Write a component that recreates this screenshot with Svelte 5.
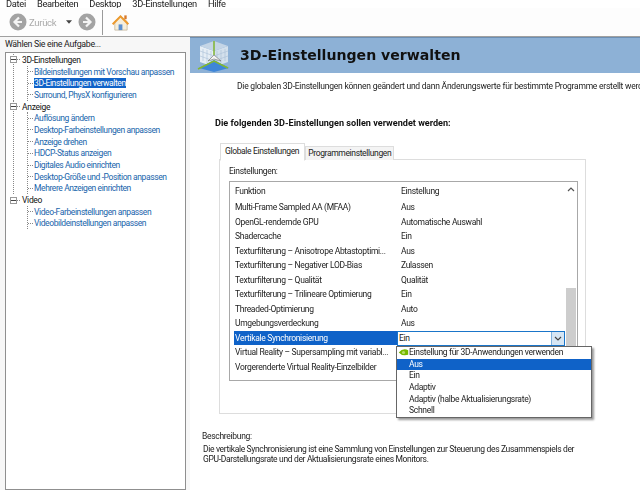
<script>
  const tree = [
    { name: "3D-Einstellungen", items: ["Bildeinstellungen mit Vorschau anpassen", "3D-Einstellungen verwalten", "Surround, PhysX konfigurieren"] },
    { name: "Anzeige", items: ["Auflösung ändern", "Desktop-Farbeinstellungen anpassen", "Anzeige drehen", "HDCP-Status anzeigen", "Digitales Audio einrichten", "Desktop-Größe und -Position anpassen", "Mehrere Anzeigen einrichten"] },
    { name: "Video", items: ["Video-Farbeinstellungen anpassen", "Videobildeinstellungen anpassen"] }
  ];
  const rows = [
    ["Multi-Frame Sampled AA (MFAA)", "Aus"],
    ["OpenGL-rendernde GPU", "Automatische Auswahl"],
    ["Shadercache", "Ein"],
    ["Texturfilterung – Anisotrope Abtastoptimi...", "Aus"],
    ["Texturfilterung – Negativer LOD-Bias", "Zulassen"],
    ["Texturfilterung – Qualität", "Qualität"],
    ["Texturfilterung – Trilineare Optimierung", "Ein"],
    ["Threaded-Optimierung", "Auto"],
    ["Umgebungsverdeckung", "Aus"],
    ["Vertikale Synchronisierung", ""],
    ["Virtual Reality – Supersampling mit variabl...", ""],
    ["Vorgerenderte Virtual Reality-Einzelbilder", ""]
  ];
  const options = ["Aus", "Ein", "Adaptiv", "Adaptiv (halbe Aktualisierungsrate)", "Schnell"];
</script>

<div class="app">
  <div class="menubar">
    <span>Datei</span><span>Bearbeiten</span><span>Desktop</span><span>3D-Einstellungen</span><span>Hilfe</span>
  </div>

  <div class="toolbar">
    <svg class="nav" viewBox="0 0 18 18" width="18" height="18">
      <circle cx="9" cy="9" r="8.500" fill="#a3a3a3" />
      <path d="M10 4.500 5.500 9l4.500 4.500M6 9h7" fill="none" stroke="#f4f4f4" stroke-width="2.200" />
    </svg>
    <span class="back">Zurück</span>
    <svg class="caret" viewBox="0 0 7 4" width="6" height="4"><path d="M0 0h7L3.500 4z" fill="#444" /></svg>
    <svg class="nav" viewBox="0 0 18 18" width="18" height="18">
      <circle cx="9" cy="9" r="8.500" fill="#a3a3a3" />
      <path d="M8 4.500 12.500 9 8 13.500M12 9H5" fill="none" stroke="#f4f4f4" stroke-width="2.200" />
    </svg>
    <div class="sep"></div>
    <svg class="home" viewBox="0 0 20 20" width="19" height="19">
      <path d="M4 9v9h13V9L10 3z" fill="#f6efdc" stroke="#b9a98a" stroke-width=".7" />
      <rect x="8" y="12" width="4" height="6" fill="#5b8fd0" />
      <path d="M1 11 10 2l9 9-1.500 1.500L10 5l-7.500 7.500z" fill="#ec9a2e" />
      <rect x="14" y="2.500" width="2.500" height="4" fill="#d8792a" />
    </svg>
  </div>

  <div class="main">
    <aside class="left">
      <div class="task">Wählen Sie eine Aufgabe...</div>
      <div class="treebox">
        {#each tree as group}
          <div class="branch">
            <div class="group">
              <span class="expander"></span><span class="dots"></span><span class="gname">{group.name}</span>
            </div>
            <ul>
              {#each group.items as item}
                <li><span class="link" class:selected={item === "3D-Einstellungen verwalten"}>{item}</span></li>
              {/each}
            </ul>
          </div>
        {/each}
      </div>
    </aside>

    <section class="right">
      <header class="banner">
        <svg viewBox="0 0 36 36" width="36" height="36">
          <path d="M18 30 4 25V9l14 5z" fill="#e6eef5" />
          <path d="M18 30l14-5V9l-14 5z" fill="#d3e0ec" />
          <path d="M4 9l14-5 14 5-14 5z" fill="#c4d5e6" />
          <path d="M7 12v12M11 13v13M15 14v14M21 14v14M25 13v13M29 12v12M4 14l14 5 14-5M4 19l14 5 14-5" stroke="#a9c0d6" stroke-width=".6" fill="none" />
          <path d="M18 4v14" stroke="#7fb531" stroke-width="1.500" />
          <path d="M3 31l15-8 15 8-15 4z" fill="#3f86d8" />
          <path d="M2 32l16-8 14 7" fill="none" stroke="#86b92e" stroke-width="1.500" />
          <path d="M12 24l6-6 7 6-7-2z" fill="#f4f4f4" stroke="#555" stroke-width=".5" />
        </svg>
        <h1>3D-Einstellungen verwalten</h1>
      </header>
      <p class="intro">Die globalen 3D-Einstellungen können geändert und dann Änderungswerte für bestimmte Programme erstellt werden.</p>
      <h2>Die folgenden 3D-Einstellungen sollen verwendet werden:</h2>

      <div class="tabs">
        <div class="tab active">Globale Einstellungen</div>
        <div class="tab">Programmeinstellungen</div>
      </div>
      <div class="panel">
        <div class="label">Einstellungen:</div>
        <div class="table">
          <div class="rows">
            <div class="row head"><span>Funktion</span><span>Einstellung</span></div>
            {#each rows as r}
              <div class="row" class:sel={r[0].startsWith("Vertikale")}>
                <span class="name">{r[0]}</span>
                <span class="value">{r[1]}</span>
              </div>
            {/each}
          </div>
          <div class="scrollbar">
            <svg viewBox="0 0 8 5" width="8" height="5"><path d="M1 4l3-3 3 3" fill="none" stroke="#555" stroke-width="1.200" /></svg>
            <div class="thumb"></div>
          </div>

          <div class="combo">
            <span>Ein</span>
            <span class="drop"><svg viewBox="0 0 8 5" width="8" height="5"><path d="M1 1l3 3 3-3" fill="none" stroke="#444" stroke-width="1.200" /></svg></span>
          </div>
          <div class="popup">
            <div class="opt first">
              <svg viewBox="0 0 14 8" width="11" height="7"><path d="M1 4q5-6 12-3v6q-8 2-12-3z" fill="#76b900" /><circle cx="7" cy="4" r="2" fill="#b7dc6a" /></svg>
              <span>Einstellung für 3D-Anwendungen verwenden</span>
            </div>
            {#each options as o, i}
              <div class="opt" class:hot={i === 0}>{o}</div>
            {/each}
          </div>
        </div>
      </div>

      <div class="desc">
        <div class="dlabel">Beschreibung:</div>
        <p>Die vertikale Synchronisierung ist eine Sammlung von Einstellungen zur Steuerung des Zusammenspiels der<br />GPU-Darstellungsrate und der Aktualisierungsrate eines Monitors.</p>
      </div>
    </section>
  </div>
</div>

<style>
:global(body) {
  margin: 0;
  background: #fff;
}

.app {
  width: 640px;
  height: 490px;
  overflow: hidden;
  display: flex;
  flex-direction: column;
  font-family: Roboto, "Liberation Sans", Arial, sans-serif;
  font-size: 8.500px;
  letter-spacing: -0.3px;
  color: #222;
  filter: blur(0.3px);
}

.menubar {
  height: 8px;
  flex: none;
  display: flex;
  gap: 11px;
  padding-left: 6px;
  font-size: 9.300px;
  overflow: hidden;
  align-items: flex-end;
}

.menubar span {
  line-height: 8px;
  height: 8px;
  margin-top: -5px;
}

.toolbar {
  height: 29px;
  flex: none;
  display: flex;
  align-items: center;
  padding-left: 9px;
  border-bottom: 1px solid #a0a0a0;
  background: #fdfdfd;
  box-sizing: border-box;
}

.back {
  color: #aaa;
  margin-left: 2px;
  font-size: 9.500px;
  width: 27px;
}

.caret {
  margin: 0 6px 0 10px;
}

.sep {
  width: 1px;
  height: 25px;
  background: #9a9a9a;
  margin: 0 8px 0 6px;
}

.main {
  flex: 1;
  display: flex;
  min-height: 0;
}

.left {
  width: 190px;
  flex: none;
  display: flex;
  flex-direction: column;
  background: #f7f7f7;
}

.task {
  height: 15px;
  line-height: 15px;
  padding-left: 5px;
  font-size: 8.800px;
}

.treebox {
  flex: 1;
  margin-left: 5px;
  margin-right: 4px;
  border: 1px solid #8f8f8f;
  background: #fff;
  padding-top: 1px;
}

.branch:not(:last-child) {
  background: repeating-linear-gradient(#888 0 1px, transparent 1px 2px) 7px 0 / 1px 100% no-repeat;
}

.group {
  height: 11.700px;
  display: flex;
  align-items: center;
  color: #111;
}

.expander {
  width: 5px;
  height: 5px;
  border: 1px solid #999;
  margin-left: 4px;
  flex: none;
  background: linear-gradient(#fff 0 2px, #444 2px 3px, #fff 3px);
}

.dots {
  width: 3px;
  border-top: 1px dotted #888;
  margin-right: 2px;
}

ul {
  list-style: none;
  margin: 0 0 0 21px;
  padding: 0;
  border-left: 1px dotted #888;
}

li {
  height: 11.700px;
  color: #1864ab;
  white-space: nowrap;
  letter-spacing: -0.4px;
  display: flex;
  align-items: center;
}

li::before {
  content: "";
  width: 5px;
  flex: none;
  border-top: 1px dotted #888;
  margin-right: 1px;
}

.selected {
  background: #0f62c8;
  color: #fff;
}

.right {
  flex: 1;
  position: relative;
  min-width: 0;
}

.banner {
  height: 36px;
  box-sizing: border-box;
  background: linear-gradient(#6d8fb2 0 1px, #8db1d6 1px);
  display: flex;
  align-items: center;
  padding-left: 6px;
  gap: 8px;
}

h1 {
  margin: 0;
  font-family: "DejaVu Sans", sans-serif;
  font-size: 14.100px;
  letter-spacing: 0;
  font-weight: 700;
  color: #111;
}

.intro {
  margin: 7px 0 0 47px;
  white-space: nowrap;
  line-height: 12px;
  letter-spacing: -0.23px;
}

h2 {
  margin: 25px 0 0 25px;
  font-size: 9.100px;
  letter-spacing: 0;
  line-height: 12px;
  font-weight: 700;
  color: #111;
}

.tabs {
  display: flex;
  margin: 15px 0 0 30px;
  height: 16px;
  position: relative;
  z-index: 1;
}

.tab {
  line-height: 13px;
  height: 13px;
  margin-top: 2px;
  padding: 0 2px;
  border: 1px solid #ddd;
  border-bottom: none;
  background: #f4f4f4;
  letter-spacing: -0.35px;
}

.tab.active {
  height: 16px;
  margin-top: -1px;
  background: #fff;
  padding: 0 5px 0 4px;
  border-bottom: 1px solid #fff;
  line-height: 15px;
}

.panel {
  margin: -1px 0 0 29px;
  width: 367px;
  height: 255px;
  box-sizing: border-box;
  border: 1px solid #ddd;
  padding: 5px 7px 0 9px;
  background: #fff;
}

.label {
  line-height: 13px;
  height: 16px;
}

.table {
  width: 349px;
  height: 200px;
  box-sizing: border-box;
  border: 1px solid #a8a8a8;
  position: relative;
  display: flex;
}

.rows {
  flex: 1;
  padding-top: 2px;
}

.row {
  height: 14.550px;
  line-height: 14.550px;
  display: flex;
  padding-left: 5px;
  white-space: nowrap;
}

.head {
  height: 16px;
}

.row .name,
.head span:first-child {
  width: 166px;
}

.sel .name {
  background: #0f62c8;
  color: #fff;
  margin-left: -1px;
  padding-left: 1px;
  width: 162px;
}

.scrollbar {
  width: 11px;
  margin-right: 1px;
  position: relative;
  text-align: center;
  flex: none;
  padding-top: 5px;
  line-height: 0;
}

.thumb {
  position: absolute;
  top: 106px;
  left: 1px;
  width: 10px;
  height: 60px;
  background: #cdcdcd;
}

.combo {
  position: absolute;
  left: 167px;
  top: 149px;
  width: 168px;
  height: 15px;
  box-sizing: border-box;
  border: 1px solid #1a75c9;
  background: #fff;
  line-height: 13px;
  padding-left: 1px;
  display: flex;
  justify-content: space-between;
}

.drop {
  width: 12px;
  background: #d6e6f4;
  border-left: 1px solid #7eb0dc;
  display: flex;
  align-items: center;
  justify-content: center;
}

.popup {
  position: absolute;
  left: 166px;
  top: 164px;
  width: 196px;
  box-sizing: border-box;
  border: 1px solid #666;
  background: #fff;
  box-shadow: 2px 2px 2px rgba(0, 0, 0, .4);
  z-index: 3;
}

.opt {
  height: 11.700px;
  line-height: 11.700px;
  padding-left: 12px;
  white-space: nowrap;
}

.opt.first {
  padding-left: 1px;
  display: flex;
  align-items: center;
}

.hot {
  background: #0f62c8;
  color: #fff;
}

.desc {
  margin: 16px 0 0 12px;
}

.dlabel {
  line-height: 12px;
}

.desc p {
  margin: 2px 0 0 1px;
  line-height: 10px;
  white-space: nowrap;
  letter-spacing: -0.34px;
}
</style>
